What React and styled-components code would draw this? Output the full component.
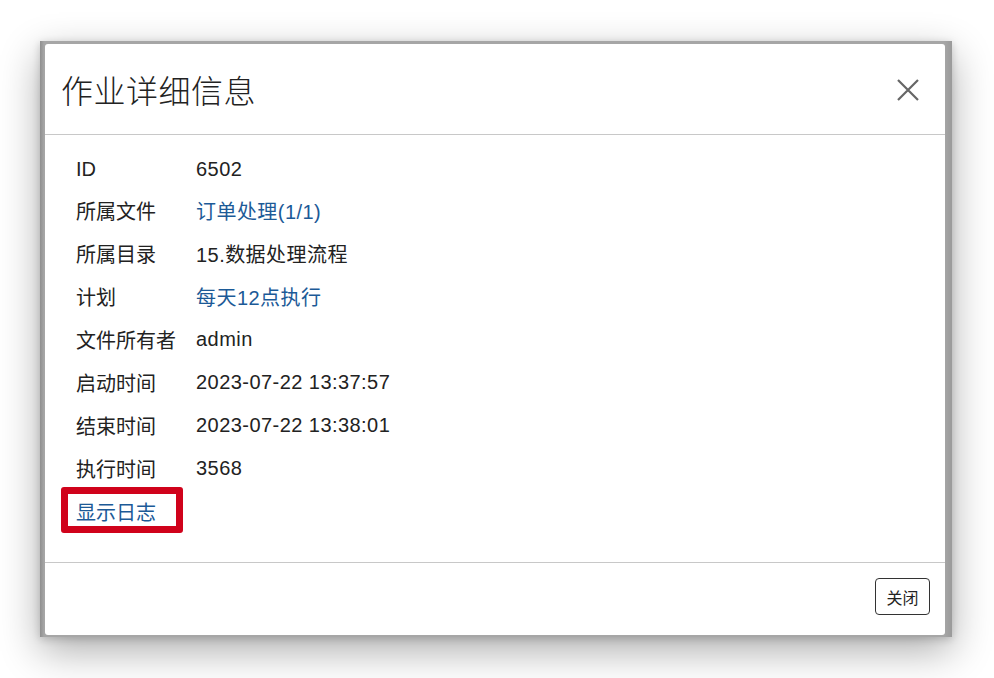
import styled, { createGlobalStyle } from 'styled-components';

const GlobalStyle = createGlobalStyle`
    html, body {
        margin: 0;
        padding: 0;
        background: #ffffff;
    }
    body {
        font-family: "Liberation Sans", "Noto Sans CJK SC", sans-serif;
        color: #222;
    }
`

const Page = styled.div`
    width: 994px;
    height: 678px;
    padding: 41px 0 0 40px;
    box-sizing: border-box;
`

const Backdrop = styled.div`
    width: 912px;
    height: 596px;
    box-sizing: border-box;
    padding: 3px 7px 2px 5px;
    background: linear-gradient(90deg, #8f8f8f 0px, #a6a6a6 4px, #a6a6a6 calc(100% - 8px), #9a9a9a 100%);
    box-shadow: 0 14px 38px rgba(0, 0, 0, 0.32), 0 2px 8px rgba(0, 0, 0, 0.18);
`

const Modal = styled.div`
    height: 100%;
    background: #fff;
    border-radius: 3px;
    display: flex;
    flex-direction: column;
`

const Header = styled.div`
    height: 90px;
    flex: none;
    display: flex;
    align-items: center;
    justify-content: space-between;
    padding: 0 25px 0 16px;
    border-bottom: 1px solid #c8c8c8;
    h1 {
        margin: 0;
        font-family: "Noto Sans CJK SC", sans-serif;
        font-weight: 300;
        font-size: 32px;
        color: #222;
        letter-spacing: 0.5px;
    }
`

const CloseIcon = styled.button`
    border: none;
    background: none;
    padding: 0;
    width: 24px;
    height: 24px;
    display: flex;
    align-items: center;
    justify-content: center;
    cursor: pointer;
    margin-top: 2px;
`

const Body = styled.div`
    flex: 1;
    padding: 14px 0 0 31px;
    border-bottom: 1px solid #c8c8c8;
`

const Row = styled.div`
    display: flex;
    align-items: center;
    height: 43px;
    font-size: 20px;
    letter-spacing: 0.45px;
    &:first-child {
        height: 40px;
    }
`

const Label = styled.div`
    width: 120px;
    flex: none;
    color: #222;
    letter-spacing: 0;
`

const Value = styled.div`
    color: ${p => (p.link ? '#1c5a97' : '#222')};
`

const Highlight = styled.span`
    position: relative;
    color: #1c5a97;
    letter-spacing: 0;
    &::after {
        content: "";
        position: absolute;
        left: -15px;
        top: -10px;
        width: 122px;
        height: 46px;
        box-sizing: border-box;
        border: 7.5px solid #d0021b;
        border-radius: 3px;
    }
`

const Footer = styled.div`
    height: 72px;
    flex: none;
    display: flex;
    align-items: center;
    justify-content: flex-end;
    padding: 0 15px 5px 0;
    box-sizing: border-box;
`

const Button = styled.button`
    width: 55px;
    height: 37px;
    border: 1px solid #333;
    border-radius: 4px;
    background: #fff;
    font-family: "Noto Sans CJK SC", sans-serif;
    font-size: 16px;
    color: #222;
    padding: 0;
`

const rows = [
    { label: 'ID', value: '6502' },
    { label: '所属文件', value: '订单处理(1/1)', link: true },
    { label: '所属目录', value: '15.数据处理流程' },
    { label: '计划', value: '每天12点执行', link: true },
    { label: '文件所有者', value: 'admin' },
    { label: '启动时间', value: '2023-07-22 13:37:57' },
    { label: '结束时间', value: '2023-07-22 13:38:01' },
    { label: '执行时间', value: '3568' },
]

export default function App() {
    return (
        <Page>
            <GlobalStyle />
            <Backdrop>
                <Modal>
                    <Header>
                        <h1>作业详细信息</h1>
                        <CloseIcon>
                            <svg width="22" height="22" viewBox="0 0 22 22">
                                <path d="M1 1L21 21M21 1L1 21" stroke="#666" strokeWidth="2.2" />
                            </svg>
                        </CloseIcon>
                    </Header>
                    <Body>
                        {rows.map(r => (
                            <Row key={r.label}>
                                <Label>{r.label}</Label>
                                <Value link={r.link}>{r.value}</Value>
                            </Row>
                        ))}
                        <Row>
                            <Highlight>显示日志</Highlight>
                        </Row>
                    </Body>
                    <Footer>
                        <Button>关闭</Button>
                    </Footer>
                </Modal>
            </Backdrop>
        </Page>
    )
}
